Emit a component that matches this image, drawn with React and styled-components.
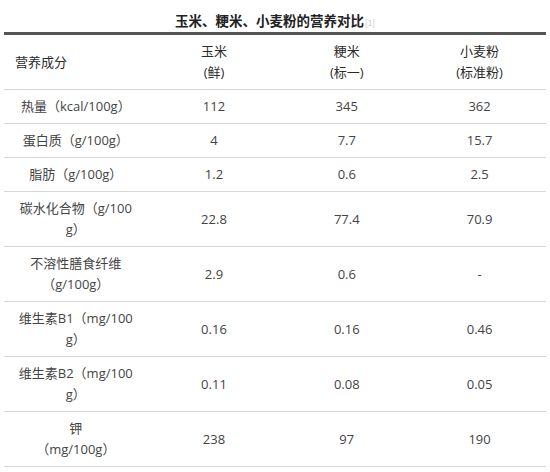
import React from "react";
import styled, { createGlobalStyle } from "styled-components";

const Global = createGlobalStyle`
  html, body { margin: 0; padding: 0; background: #fff; }
  body { font-family: "Open Sans", "Noto Sans CJK SC", sans-serif; }
`;

const Page = styled.div`
  width: 550px;
  padding: 0 4px;
  box-sizing: border-box;
`;

const Title = styled.div`
  height: 32px;
  padding-top: 10px;
  box-sizing: border-box;
  text-align: center;
  font-family: "Noto Sans CJK SC", sans-serif;
  font-size: 13.5px;
  line-height: 20px;
  font-weight: 700;
  color: #222;
`;

const Ref = styled.span`
  font-size: 8px;
  font-weight: 400;
  color: #c4c4c4;
  margin-left: 1px;
  vertical-align: baseline;
`;

const Table = styled.table`
  width: 542px;
  border-collapse: collapse;
  table-layout: fixed;
  border-top: 3px solid #555;
  font-size: 13px;
  line-height: 21px;
`;

const Row = styled.tr`
  border-bottom: 1px solid #d6d6d6;
`;

const HeadCell = styled.th`
  width: 25%;
  padding: 6px 0;
  font-weight: 400;
  color: #2b2b2b;
  text-align: ${(p) => (p.$left ? "left" : "center")};
  padding-left: ${(p) => (p.$left ? "11px" : "0")};
  vertical-align: middle;
  white-space: nowrap;
`;

const Cell = styled.td`
  padding: 6px 0;
  color: #444;
  text-align: center;
  vertical-align: middle;
  white-space: nowrap;
`;

const Line = styled.span`
  display: block;
`;

const heads = [["玉米", "(鲜)"], ["粳米", "(标一)"], ["小麦粉", "(标准粉)"]];

const rows = [
  [["热量（kcal/100g）"], "112", "345", "362"],
  [["蛋白质（g/100g）"], "4", "7.7", "15.7"],
  [["脂肪（g/100g）"], "1.2", "0.6", "2.5"],
  [["碳水化合物（g/100", "g）"], "22.8", "77.4", "70.9"],
  [["不溶性膳食纤维", "（g/100g）"], "2.9", "0.6", "-"],
  [["维生素B1（mg/100", "g）"], "0.16", "0.16", "0.46"],
  [["维生素B2（mg/100", "g）"], "0.11", "0.08", "0.05"],
  [["钾", "（mg/100g）"], "238", "97", "190"],
];

export default function App() {
  return (
    <Page>
      <Global />
      <Title>
        玉米、粳米、小麦粉的营养对比<Ref>[1]</Ref>
      </Title>
      <Table>
        <thead>
          <Row>
            <HeadCell $left>营养成分</HeadCell>
            {heads.map((h, i) => (
              <HeadCell key={i}>
                {h.map((l, j) => (
                  <Line key={j}>{l}</Line>
                ))}
              </HeadCell>
            ))}
          </Row>
        </thead>
        <tbody>
          {rows.map(([name, a, b, c], i) => (
            <Row key={i}>
              <Cell>
                {name.map((l, j) => (
                  <Line key={j}>{l}</Line>
                ))}
              </Cell>
              <Cell>{a}</Cell>
              <Cell>{b}</Cell>
              <Cell>{c}</Cell>
            </Row>
          ))}
        </tbody>
      </Table>
    </Page>
  );
}
